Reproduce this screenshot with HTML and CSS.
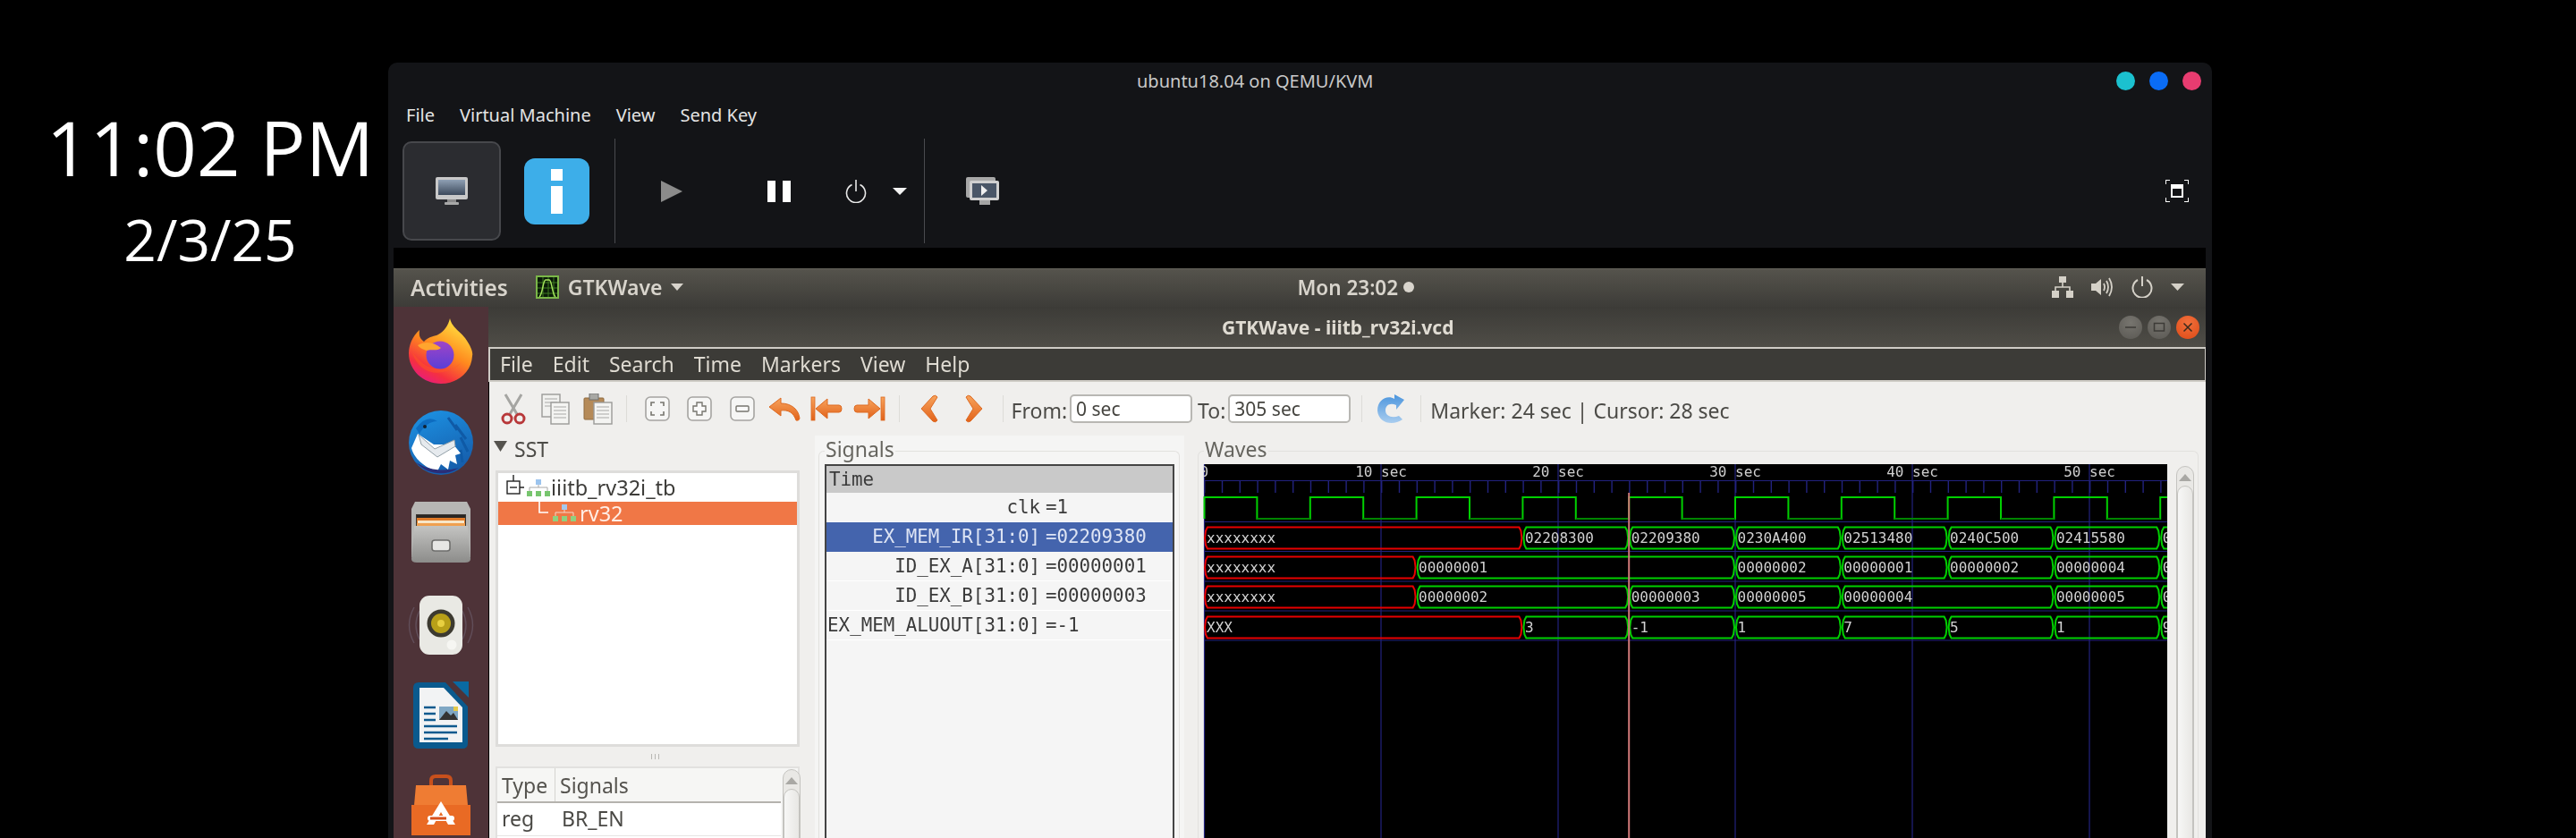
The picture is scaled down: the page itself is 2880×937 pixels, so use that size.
FILE: index.html
```html
<!DOCTYPE html>
<html lang="en">
<head>
<meta charset="utf-8">
<title>ubuntu18.04 on QEMU/KVM</title>
<link rel="stylesheet" href="styles.css">
</head>
<body>
<div class="desktop">
  <div class="clock">
    <div class="clock-time">11:02 PM</div>
    <div class="clock-date">2/3/25</div>
  </div>
  <div class="vm">
    <div class="vm-title">
      <span class="vm-title-text">ubuntu18.04 on QEMU/KVM</span>
      <div class="dots"><i class="dot teal"></i><i class="dot blue"></i><i class="dot pink"></i></div>
    </div>
    <div class="vm-menu"><span>File</span><span>Virtual Machine</span><span>View</span><span>Send Key</span></div>
    <div class="vm-tools">
      <div class="vm-btn">
        <svg width="36" height="32" viewBox="0 0 36 32"><defs><linearGradient id="scr" x1="0" y1="0" x2="0" y2="1"><stop offset="0" stop-color="#8fa0b4"/><stop offset="1" stop-color="#3d4a5c"/></linearGradient></defs><rect x="0" y="0" width="36" height="25" rx="2" fill="#c9c9c9"/><rect x="3" y="3" width="30" height="17" fill="url(#scr)"/><rect x="13" y="25" width="10" height="3" fill="#8a8a8a"/><rect x="10" y="28" width="16" height="3" rx="1" fill="#a8a8a8"/></svg>
      </div>
      <div class="vm-info"><i class="info-dot"></i><i class="info-stem"></i></div>
      <i class="vm-sep sep-a"></i>
      <svg class="i-play" width="24" height="24" viewBox="0 0 24 24"><path d="M0 0L24 12L0 24Z" fill="#8b8b8b"/></svg>
      <div class="i-pause"><i></i><i></i></div>
      <svg class="i-power" width="24" height="26" viewBox="0 0 24 26"><path d="M7.5 5.5A10.5 10.5 0 1 0 16.5 5.5" fill="none" stroke="#e8e8e8" stroke-width="1.6"/><path d="M12 0V13" stroke="#e8e8e8" stroke-width="1.6"/></svg>
      <svg class="i-drop" width="16" height="8" viewBox="0 0 16 8"><path d="M0 0H16L8 8Z" fill="#f2f2f2"/></svg>
      <i class="vm-sep sep-b"></i>
      <svg class="i-screens" width="37" height="32" viewBox="0 0 37 32"><rect x="0" y="0" width="33" height="23" rx="2" fill="#a8a8a8"/><rect x="4" y="4" width="33" height="22" rx="2" fill="#d0d0d0"/><rect x="7" y="7" width="27" height="16" fill="#4a5667"/><path d="M17 9L24 15L17 21Z" fill="#f0f0f0"/><rect x="15" y="26" width="12" height="5" fill="#a4a4a4"/></svg>
      <svg class="i-full" width="26" height="25" viewBox="0 0 26 25"><path d="M0 5V0H5M21 0H26V5M26 20V25H21M5 25H0V20" fill="none" stroke="#fff" stroke-width="2"/><rect x="6" y="5" width="14" height="15" fill="#fff"/><rect x="8" y="10" width="10" height="8" fill="#131417"/></svg>
    </div>

    <div class="guest">
      <div class="topbar">
        <span class="activities">Activities</span>
        <svg class="gw-icon" width="26" height="26" viewBox="0 0 26 26"><rect x="1" y="1" width="24" height="24" fill="#0a1a08" stroke="#7ab648" stroke-width="2"/><path d="M2 8H24M2 14H24M2 20H24M8 2V24M14 2V24M20 2V24" stroke="#3f7a20" stroke-width="1"/><path d="M4 24C8 20 8 5 11 5H15C18 5 18 20 22 24" fill="none" stroke="#a4e45c" stroke-width="1.5"/></svg>
        <span class="app-name">GTKWave</span>
        <svg class="top-arrow" width="14" height="8" viewBox="0 0 14 8"><path d="M0 0H14L7 8Z" fill="#d8d4cc"/></svg>
        <span class="datetime">Mon 23:02</span><i class="notif"></i>
        <div class="status">
          <svg width="24" height="24" viewBox="0 0 24 24"><g fill="#d5d1c8"><rect x="8" y="0" width="8" height="7"/><rect x="0" y="16" width="8" height="8"/><rect x="16" y="16" width="8" height="8"/></g><path d="M12 7V12M4 16V12H20V16" fill="none" stroke="#d5d1c8" stroke-width="1.6"/></svg>
          <svg width="25" height="22" viewBox="0 0 25 22"><path d="M0 7H5L11 2V20L5 15H0Z" fill="#d5d1c8"/><path d="M14 7Q16 11 14 15M17 4Q21 11 17 18M20 1Q26 11 20 21" fill="none" stroke="#d5d1c8" stroke-width="1.8"/></svg>
          <svg width="24" height="24" viewBox="0 0 24 24"><path d="M7 4A10.5 10.5 0 1 0 17 4" fill="none" stroke="#d5d1c8" stroke-width="2"/><path d="M12 0V11" stroke="#d5d1c8" stroke-width="2"/></svg>
          <svg width="15" height="8" viewBox="0 0 15 8"><path d="M0 0H15L7.5 8Z" fill="#d5d1c8"/></svg>
        </div>
      </div>
      <div class="guest-body">
        <div class="dock">
          <svg width="72" height="74" viewBox="0 0 72 74"><defs>
            <linearGradient id="ff" x1=".8" y1=".1" x2=".3" y2="1"><stop offset="0" stop-color="#ffdc3e"/><stop offset=".45" stop-color="#ff8a1e"/><stop offset=".8" stop-color="#f5303f"/><stop offset="1" stop-color="#e81c7c"/></linearGradient>
            <linearGradient id="ffg" x1="0" y1="0" x2="0" y2="1"><stop offset="0" stop-color="#a044c8"/><stop offset="1" stop-color="#5a3fd6"/></linearGradient>
          </defs><path d="M46 0C48 10 58 15 63 22C70 32 72 38 71 42C70 60 55 73 36 73C16 73 0 58 0 39C0 30 4 20 12 13C11 20 13 23 17 26C22 20 30 20 33 18C40 14 44 8 46 0Z" fill="url(#ff)"/><circle cx="35" cy="41" r="15.5" fill="url(#ffg)"/><path d="M10 30C18 25 28 26 36 33C32 37 24 34 20 36C15 34 12 33 10 30Z" fill="#ffa52e"/><path d="M4 38C10 60 34 70 58 50C50 60 38 58 28 56C18 54 12 48 4 38Z" fill="#ff5a22" opacity=".45"/></svg>
          <svg width="76" height="74" viewBox="0 0 76 74"><defs><linearGradient id="tb" x1=".3" y1="0" x2=".7" y2="1"><stop offset="0" stop-color="#1c8fe0"/><stop offset="1" stop-color="#155aa8"/></linearGradient></defs><circle cx="38" cy="38" r="36" fill="url(#tb)"/><path d="M46 10L56 24M54 18L66 34M60 32L68 48M60 46L62 60" stroke="#0f5aa6" stroke-width="3"/><path d="M5 44L12 28L30 40L52 40L60 50L54 52L56 62L48 58L46 68L38 62L34 70C20 66 8 56 5 44Z" fill="#fff"/><path d="M13 29L31 45L53 35L54 42L34 54L16 40Z" fill="#e6eaee" stroke="#93a0a8" stroke-width="1"/><path d="M10 60C22 74 44 76 58 66C44 70 26 70 10 60Z" fill="#2a2e78"/><path d="M10 22Q22 6 34 14Q22 14 14 28Z" fill="#0d6cc0"/><circle cx="20" cy="20" r="2" fill="#123"/></svg>
          <svg width="66" height="68" viewBox="0 0 66 68"><defs><linearGradient id="cab" x1="0" y1="0" x2="0" y2="1"><stop offset="0" stop-color="#c4c4c2"/><stop offset="1" stop-color="#8c8c8a"/></linearGradient></defs><path d="M4 0H62L66 8V62H0V8Z" fill="#b6b6b4"/><rect x="5" y="14" width="56" height="22" fill="#3a3632"/><rect x="6" y="15" width="54" height="4" fill="#2a2622"/><rect x="6" y="18" width="54" height="8" fill="#e07a28"/><rect x="7" y="21" width="52" height="3" fill="#f8e6c8"/><rect x="6" y="24" width="54" height="6" fill="#f0a050"/><path d="M3 27H63L66 64Q66 68 60 68H6Q0 68 0 64Z" fill="url(#cab)"/><rect x="23" y="43" width="20" height="12" rx="3" fill="#e6e6e4" stroke="#6e6e6c" stroke-width="1.6"/></svg>
          <svg width="76" height="68" viewBox="0 0 76 68"><g fill="none" stroke="#6a5a68" stroke-width="1.4" opacity=".7"><path d="M8 14Q-3 34 8 54"/><path d="M14 18Q6 34 14 50"/><path d="M68 14Q79 34 68 54"/><path d="M62 18Q70 34 62 50"/></g><rect x="14" y="1" width="48" height="66" rx="11" fill="#e9e9e4"/><circle cx="38" cy="32" r="15.5" fill="#3c3a30"/><circle cx="38" cy="32" r="11" fill="#b8a018"/><circle cx="38" cy="32" r="4" fill="#e8d040"/><circle cx="50" cy="56" r="5.5" fill="#f6f6f2"/></svg>
          <svg width="64" height="76" viewBox="0 0 64 76"><path d="M7 1H37L62 28V69Q62 75 56 75H7Q1 75 1 69V7Q1 1 7 1Z" fill="#0a5a8e"/><path d="M45 0H63V18Z" fill="#0a6aa2"/><path d="M8 7H35L56 29V68H8Z" fill="#f2f3f4"/><path d="M13 29H26M13 36H26M13 43H26M13 50H50M13 57H50M13 64H40" stroke="#0e5a8e" stroke-width="2.6"/><rect x="30" y="28" width="21" height="15" fill="#7fa7c4"/><path d="M30 43L38 33L43 38L46 35L51 43Z" fill="#333"/><rect x="46" y="28" width="5" height="5" fill="#e4c94a"/></svg>
          <svg width="68" height="70" viewBox="0 0 68 70"><path d="M23 14V7Q23 2 28 2H40Q45 2 45 7V14" fill="none" stroke="#c8501c" stroke-width="4"/><path d="M6 12H62L67 68H1Z" fill="#ef7c33"/><path d="M1 34H67V68H1Z" fill="#e96a24"/><path d="M34 30L50 56H42L34 42L26 56H18Z" fill="#fff"/><rect x="19" y="46" width="30" height="6" rx="3" fill="#fff"/><rect x="22" y="47.5" width="18" height="3" fill="#d8501c"/></svg>
        </div>
        <div class="app">
          <div class="app-title">
            <span class="app-title-text">GTKWave - iiitb_rv32i.vcd</span>
            <div class="win-btns">
              <div class="win-btn"><svg width="14" height="14" viewBox="0 0 14 14"><path d="M1 7H13" stroke="#3c3b37" stroke-width="1.5"/></svg></div>
              <div class="win-btn"><svg width="14" height="14" viewBox="0 0 14 14"><rect x="1.5" y="2.5" width="11" height="8.5" fill="none" stroke="#3c3b37" stroke-width="1.5"/></svg></div>
              <div class="win-btn close"><svg width="14" height="14" viewBox="0 0 14 14"><path d="M2.5 2.5L11.5 11.5M11.5 2.5L2.5 11.5" stroke="#3c2a1c" stroke-width="1.5"/></svg></div>
            </div>
          </div>
          <div class="app-menu"><span>File</span><span>Edit</span><span>Search</span><span>Time</span><span>Markers</span><span>View</span><span>Help</span></div>
          <div class="app-main">
            <div class="toolbar">
              <svg class="t-icons" width="0" height="0"><defs>
                <linearGradient id="or" x1="0" y1="0" x2="0" y2="1"><stop offset="0" stop-color="#f7a35c"/><stop offset="1" stop-color="#e2621a"/></linearGradient>
              </defs></svg>
              <div class="tool"><svg width="28" height="35" viewBox="0 0 28 35"><path d="M5 1L18 23M23 1L10 23" stroke="#a5a5a2" stroke-width="3"/><g fill="none" stroke="#b8383a" stroke-width="3"><ellipse cx="7" cy="28" rx="5" ry="5"/><ellipse cx="21" cy="28" rx="5" ry="5"/></g></svg></div>
              <div class="tool"><svg width="32" height="35" viewBox="0 0 32 35"><rect x="1" y="1" width="20" height="25" fill="#f1f1ef" stroke="#9a9a98" stroke-width="1.4"/><path d="M4 6H18M4 10H18M4 14H18" stroke="#a8a8a6"/><rect x="11" y="10" width="20" height="24" fill="#f4f4f2" stroke="#9a9a98" stroke-width="1.4"/><path d="M14 15H28M14 19H28M14 23H28M14 27H28" stroke="#a8a8a6" stroke-width="1.2"/></svg></div>
              <div class="tool"><svg width="33" height="35" viewBox="0 0 33 35"><rect x="1" y="5" width="22" height="24" rx="1" fill="#b58a58" stroke="#8f6a3f"/><rect x="7" y="0" width="10" height="7" fill="#a8a8a4" stroke="#707070"/><rect x="12" y="10" width="20" height="24" fill="#f4f4f2" stroke="#9a9a98" stroke-width="1.4"/><path d="M15 15H29M15 19H29M15 23H29M15 27H29" stroke="#a8a8a6" stroke-width="1.2"/></svg></div>
              <i class="t-sep s1"></i>
              <div class="tool"><svg width="28" height="28" viewBox="0 0 28 28"><rect x="1" y="1" width="26" height="26" rx="5" fill="#f6f6f5" stroke="#a5a4a1" stroke-width="1.6"/><path d="M7 11V7H11M17 7H21V11M21 17V21H17M11 21H7V17" fill="none" stroke="#77766f" stroke-width="1.6"/></svg></div>
              <div class="tool"><svg width="28" height="28" viewBox="0 0 28 28"><rect x="1" y="1" width="26" height="26" rx="5" fill="#f6f6f5" stroke="#a5a4a1" stroke-width="1.6"/><path d="M11 7H17V11H21V17H17V21H11V17H7V11H11Z" fill="#fafafa" stroke="#77766f" stroke-width="1.4"/></svg></div>
              <div class="tool"><svg width="28" height="28" viewBox="0 0 28 28"><rect x="1" y="1" width="26" height="26" rx="5" fill="#f6f6f5" stroke="#a5a4a1" stroke-width="1.6"/><rect x="7" y="11" width="14" height="6" rx="1" fill="#fafafa" stroke="#77766f" stroke-width="1.4"/></svg></div>
              <div class="tool"><svg width="36" height="27" viewBox="0 0 36 27"><path d="M14 1L1 11L14 21V15C22 14 28 17 31 26Q34 27 35 24C34 14 26 7 14 7Z" fill="url(#or)" stroke="#dd6a22"/></svg></div>
              <div class="tool"><svg width="36" height="28" viewBox="0 0 36 28"><rect x="1" y="1" width="4" height="26" fill="url(#or)" stroke="#dd6a22" stroke-width=".8"/><path d="M19 3L6 14L19 25V18H32Q35 18 35 14Q35 10 32 10H19Z" fill="url(#or)" stroke="#dd6a22"/></svg></div>
              <div class="tool"><svg width="36" height="28" viewBox="0 0 36 28"><rect x="31" y="1" width="4" height="26" fill="url(#or)" stroke="#dd6a22" stroke-width=".8"/><path d="M17 3L30 14L17 25V18H4Q1 18 1 14Q1 10 4 10H17Z" fill="url(#or)" stroke="#dd6a22"/></svg></div>
              <i class="t-sep s2"></i>
              <div class="tool nav"><svg width="20" height="32" viewBox="0 0 20 32"><path d="M14 2Q17 0 19 3L11 16L19 29Q17 32 14 30L1 16Z" fill="url(#or)" stroke="#dd6a22"/></svg></div>
              <div class="tool nav"><svg width="20" height="32" viewBox="0 0 20 32"><path d="M6 2Q3 0 1 3L9 16L1 29Q3 32 6 30L19 16Z" fill="url(#or)" stroke="#dd6a22"/></svg></div>
              <i class="t-sep s3"></i>
              <span class="t-label from">From:</span>
              <div class="entry">0 sec</div>
              <span class="t-label to">To:</span>
              <div class="entry">305 sec</div>
              <i class="t-sep s4"></i>
              <svg class="refresh" width="31" height="33" viewBox="0 0 31 33"><defs><linearGradient id="rf" x1="0" y1="0" x2="0" y2="1"><stop offset="0" stop-color="#4b95dd"/><stop offset="1" stop-color="#a9cdef"/></linearGradient></defs><path d="M19 0L30 6L21 17V12C14 9 9 12 9 18C9 24 16 27 24 24L28 28C17 36 1 32 0 18C0 6 11 0 19 5Z" fill="url(#rf)"/></svg>
              <i class="t-sep s5"></i>
              <span class="t-label marker">Marker: 24 sec | Cursor: 28 sec</span>
            </div>
            <div class="panes">
              <div class="sst">
                <div class="sst-head"><svg width="15" height="12" viewBox="0 0 15 12"><path d="M0 0H15L7.5 12Z" fill="#55534e"/></svg><span>SST</span></div>
                <div class="tree">
                  <div class="tree-row">
                    <svg class="tree-exp" width="20" height="24" viewBox="0 0 20 24"><path d="M8 0V7M15 14H20" stroke="#222" stroke-width="1.4"/><rect x="1" y="7" width="14" height="14" fill="#fff" stroke="#222" stroke-width="1.4"/><path d="M4 14H12" stroke="#222" stroke-width="1.4"/></svg>
                    <svg class="hier" width="26" height="22" viewBox="0 0 26 22"><rect x="10" y="1" width="6" height="6" fill="#9cc4ee"/><path d="M13 7V10M3 14V10H23V14" fill="none" stroke="#a8a8a8"/><g fill="#77c56e"><rect x="0" y="14" width="6" height="6"/><rect x="10" y="14" width="6" height="6"/><rect x="20" y="14" width="6" height="6"/></g></svg>
                    <span>iiitb_rv32i_tb</span>
                  </div>
                  <div class="tree-row selected">
                    <svg class="tree-l" width="11" height="13" viewBox="0 0 11 13"><path d="M1 0V12H11" fill="none" stroke="#fff" stroke-width="1.6"/></svg>
                    <svg class="hier" width="26" height="22" viewBox="0 0 26 22"><rect x="10" y="1" width="6" height="6" fill="#a6c8ec"/><path d="M13 7V10M3 14V10H23V14" fill="none" stroke="#f4d8c8"/><g fill="#8fd080"><rect x="0" y="14" width="6" height="6"/><rect x="10" y="14" width="6" height="6"/><rect x="20" y="14" width="6" height="6"/></g></svg>
                    <span>rv32</span>
                  </div>
                </div>
                <div class="handle"><i></i><i></i><i></i></div>
                <div class="sigtable">
                  <div class="sig-cols">
                    <div class="sig-head"><span class="c-type">Type</span><span class="c-sig">Signals</span></div>
                    <div class="sig-row"><span class="c-type">reg</span><span class="c-sig">BR_EN</span></div>
                  </div>
                  <div class="scroll small"><svg width="14" height="8" viewBox="0 0 14 8"><path d="M7 0L14 8H0Z" fill="#a9a8a4"/></svg><div class="thumb"></div></div>
                </div>
              </div>
              <div class="signals-pane">
                <fieldset class="frame signals">
                  <legend>Signals</legend>
                  <div class="siglist">
                    <div class="sl-time">Time</div>
                    <div class="sl-row"><span>clk</span><span>=1</span></div>
                    <div class="sl-row active"><span>EX_MEM_IR[31:0]</span><span>=02209380</span></div>
                    <div class="sl-row"><span>ID_EX_A[31:0]</span><span>=00000001</span></div>
                    <div class="sl-row"><span>ID_EX_B[31:0]</span><span>=00000003</span></div>
                    <div class="sl-row"><span>EX_MEM_ALUOUT[31:0]</span><span>=-1</span></div>
                  </div>
                </fieldset>
              </div>
              <div class="waves-pane">
                <fieldset class="frame waves">
                  <legend>Waves</legend>
                  <div class="wave-wrap">
                    <svg class="wave" width="1077" height="440" viewBox="0 0 1077 440">
                      <defs>
                        <clipPath id="canvas"><rect x="0" y="0" width="1077" height="440"/></clipPath>
                        <polygon id="s1" points="1,12 2,4 4,0 114.8,0 116.8,4 117.8,12 116.8,20 114.8,24 4,24 2,20"/>
                        <polygon id="s2" points="1,12 2,4 4,0 233.6,0 235.6,4 236.6,12 235.6,20 233.6,24 4,24 2,20"/>
                        <polygon id="s3" points="1,12 2,4 4,0 352.4,0 354.4,4 355.4,12 354.4,20 352.4,24 4,24 2,20"/>
                      </defs>
                      <g class="grid">
                        <path d="M.5 0V440M198 0V440M396 0V440M594 0V440M792 0V440M990 0V440"/>
                        <path d="M0 18.5H1077M0 64.5H1077M0 97.5H1077M0 131H1077M0 164H1077M0 197H1077"/>
                        <line class="ticks" x1="0" y1="25" x2="1077" y2="25"/>
                      </g>
                      <g class="tlabels">
                        <text x="-4.5" y="14" clip-path="url(#canvas)">0</text>
                        <text x="169.2" y="14">10 sec</text>
                        <text x="367.2" y="14">20 sec</text>
                        <text x="565.2" y="14">30 sec</text>
                        <text x="763.2" y="14">40 sec</text>
                        <text x="961.2" y="14">50 sec</text>
                      </g>
                      <path class="clk" d="M.5 61V37H59.4V61H118.8V37H178.2V61H237.6V37H297V61H356.4V37H415.8V61H475.2V37H534.6V61H594V37H653.4V61H712.8V37H772.2V61H831.6V37H891V61H950.4V37H1009.8V61H1069.2V37H1077"/>
                      <path class="clk-low" d="M59.4 61H118.8M178.2 61H237.6M297 61H356.4M415.8 61H475.2M534.6 61H594M653.4 61H712.8M772.2 61H831.6M891 61H950.4M1009.8 61H1069.2"/>
                      <g class="red">
                        <use href="#s3" x="0" y="70.5"/><use href="#s2" x="0" y="103.5"/><use href="#s2" x="0" y="136.5"/><use href="#s3" x="0" y="170.5"/>
                      </g>
                      <g class="grn" clip-path="url(#canvas)">
                        <use href="#s1" x="356.4" y="70.5"/><use href="#s1" x="475.2" y="70.5"/><use href="#s1" x="594" y="70.5"/><use href="#s1" x="712.8" y="70.5"/><use href="#s1" x="831.6" y="70.5"/><use href="#s1" x="950.4" y="70.5"/><use href="#s1" x="1069.2" y="70.5"/>
                        <use href="#s3" x="237.6" y="103.5"/><use href="#s1" x="594" y="103.5"/><use href="#s1" x="712.8" y="103.5"/><use href="#s1" x="831.6" y="103.5"/><use href="#s1" x="950.4" y="103.5"/><use href="#s1" x="1069.2" y="103.5"/>
                        <use href="#s2" x="237.6" y="136.5"/><use href="#s1" x="475.2" y="136.5"/><use href="#s1" x="594" y="136.5"/><use href="#s2" x="712.8" y="136.5"/><use href="#s1" x="950.4" y="136.5"/><use href="#s1" x="1069.2" y="136.5"/>
                        <use href="#s1" x="356.4" y="170.5"/><use href="#s1" x="475.2" y="170.5"/><use href="#s1" x="594" y="170.5"/><use href="#s1" x="712.8" y="170.5"/><use href="#s1" x="831.6" y="170.5"/><use href="#s1" x="950.4" y="170.5"/><use href="#s1" x="1069.2" y="170.5"/>
                      </g>
                      <g class="vals" clip-path="url(#canvas)">
                        <text x="3" y="88">xxxxxxxx</text><text x="358.9" y="88">02208300</text><text x="477.7" y="88">02209380</text><text x="596.5" y="88">0230A400</text><text x="715.3" y="88">02513480</text><text x="834.1" y="88">0240C500</text><text x="952.9" y="88">02415580</text><text x="1071.7" y="88">0</text>
                        <text x="3" y="121">xxxxxxxx</text><text x="240.1" y="121">00000001</text><text x="596.5" y="121">00000002</text><text x="715.3" y="121">00000001</text><text x="834.1" y="121">00000002</text><text x="952.9" y="121">00000004</text><text x="1071.7" y="121">0</text>
                        <text x="3" y="154">xxxxxxxx</text><text x="240.1" y="154">00000002</text><text x="477.7" y="154">00000003</text><text x="596.5" y="154">00000005</text><text x="715.3" y="154">00000004</text><text x="952.9" y="154">00000005</text><text x="1071.7" y="154">0</text>
                        <text x="3" y="188">XXX</text><text x="358.9" y="188">3</text><text x="477.7" y="188">-1</text><text x="596.5" y="188">1</text><text x="715.3" y="188">7</text><text x="834.1" y="188">5</text><text x="952.9" y="188">1</text><text x="1071.7" y="188">9</text>
                      </g>
                      <path class="mark" d="M475.2 32V440"/>
                    </svg>
                    <div class="scroll"><svg width="14" height="8" viewBox="0 0 14 8"><path d="M7 0L14 8H0Z" fill="#a9a8a4"/></svg><div class="thumb"></div></div>
                  </div>
                </fieldset>
              </div>
            </div>
          </div>
        </div>
      </div>
    </div>
  </div>
</div>
</body>
</html>
```
FILE: styles.css
```css
* { box-sizing: border-box; }
html, body { margin: 0; padding: 0; background: #000; }
i { display: block; }
svg { display: block; flex: none; }

.desktop { display: flex; width: 2880px; height: 937px; overflow: hidden; background: #000; }

.clock { width: 434px; flex: none; padding: 116px 0 0 36px; color: #fff; text-align: center; font-family: "Open Sans", sans-serif; }
.clock-time { font-size: 85px; line-height: 96px; white-space: nowrap; }
.clock-date { font-size: 64px; line-height: 88px; margin-top: 12px; }

.vm { width: 2039px; height: 867px; margin-top: 70px; flex: none; background: #131417; border-radius: 10px 10px 0 0; display: flex; flex-direction: column; font-family: "Noto Sans", sans-serif; }
.vm-title { height: 40px; flex: none; display: flex; align-items: center; justify-content: space-between; padding: 0 12px 0 837px; }
.vm-title-text { color: #c9c9c9; font-size: 20px; white-space: nowrap; }
.dots { display: flex; gap: 16px; }
.dot { width: 21px; height: 21px; border-radius: 50%; }
.teal { background: #1bc1cf; }
.blue { background: #0a6cf5; }
.pink { background: #e83c70; }

.vm-menu { height: 40px; flex: none; display: flex; gap: 28px; padding: 0 0 4px 20px; align-items: center; color: #e4e4e4; font-size: 20px; }

.vm-tools { height: 127px; flex: none; display: flex; align-items: center; padding: 0 26px 0 16px; }
.vm-btn { width: 110px; height: 111px; background: #2b2c30; border: 2px solid #47484c; border-radius: 10px; display: flex; align-items: center; justify-content: center; }
.vm-info { width: 73px; height: 74px; margin-left: 26px; background: #3daee9; border-radius: 12px; display: flex; flex-direction: column; align-items: center; padding-top: 12px; }
.info-dot { width: 13px; height: 13px; background: #fff; }
.info-stem { width: 13px; height: 31px; margin-top: 6px; background: #fff; }
.vm-sep { width: 1px; height: 117px; background: #4a4b4f; }
.sep-a { margin-left: 28px; }
.sep-b { margin-left: 19px; }
.i-play { margin-left: 51px; }
.i-pause { margin-left: 95px; display: flex; gap: 8px; }
.i-pause i { width: 9px; height: 24px; background: #fff; }
.i-power { margin-left: 61px; }
.i-drop { margin-left: 29px; }
.i-screens { margin-left: 46px; }
.i-full { margin-left: auto; }

.guest { flex: none; height: 660px; margin: 0 7px 0 6px; padding-top: 23px; background: #000; overflow: hidden; filter: blur(.45px); font-family: "Noto Sans", sans-serif; }

.topbar { height: 43px; display: flex; align-items: center; padding: 0 24px 2px 19px; background: linear-gradient(#55534c, #3d3c38); border-top: 1px solid #64625a; color: #d8d4cc; font-size: 23px; }
.activities { font-weight: 600; font-size: 24.4px; }
.gw-icon { margin-left: 31px; }
.app-name { margin-left: 10px; font-weight: 600; }
.top-arrow { margin-left: 10px; }
.datetime { margin-left: 686px; font-weight: 600; white-space: nowrap; font-size: 22.5px; }
.notif { width: 12px; height: 12px; margin-left: 6px; border-radius: 50%; background: #d8d4cc; }
.status { margin-left: auto; display: flex; align-items: center; gap: 20px; }

.guest-body { display: flex; height: 594px; }
.dock { width: 106px; flex: none; padding-top: 13px; background: #4e3338; display: flex; flex-direction: column; align-items: center; gap: 30px; }
.dock svg:nth-child(2) { margin-top: -3px; }
.dock svg:nth-child(4) { margin-top: 6px; }
.dock svg:nth-child(5) { margin-top: -1px; }
.dock svg:nth-child(6) { margin-top: -2px; }

.app { flex: 1; min-width: 0; display: flex; flex-direction: column; }
.app-title { height: 45px; flex: none; display: flex; align-items: center; justify-content: space-between; padding: 0 7px 0 820px; background: linear-gradient(#3c3b37, #4f4d47); }
.app-title-text { color: #dfdbd2; font-size: 21px; font-weight: 700; white-space: nowrap; }
.win-btns { display: flex; gap: 6px; }
.win-btn { width: 26px; height: 26px; border-radius: 50%; background: radial-gradient(circle at 50% 30%, #77756f, #5a5853); display: flex; align-items: center; justify-content: center; }
.win-btn.close { background: radial-gradient(circle at 50% 30%, #f2703c, #dd4a16); }

.app-menu { height: 39px; flex: none; display: flex; gap: 22px; align-items: center; padding: 0 0 2px 11px; background: #3c3b37; border: 1px solid #cfccc6; border-width: 2px 1px 2px 2px; color: #dfdbd2; font-size: 23px; }

.app-main { flex: 1; min-height: 0; margin-left: 1px; background: #f0efed; display: flex; flex-direction: column; color: #4c4b47; font-size: 23px; }
.toolbar { height: 60px; flex: none; display: flex; align-items: center; padding: 0 0 0 3px; }
.t-icons { position: absolute; }
.tool { width: 47.4px; flex: none; display: flex; justify-content: center; }
.tool.nav { width: 50px; }
.t-sep { width: 1px; height: 30px; background: #dddcd8; flex: none; }
.s1 { margin: 0 10px 0 8px; }
.s2 { margin: 0 8px 0 9px; }
.s3 { margin: 0 9px 0 7px; }
.s4 { margin: 0 17px 0 12px; }
.s5 { margin: 0 10px 0 17px; }
.t-label { white-space: pre; padding-top: 3px; }
.t-label.from { margin-right: 3px; }
.t-label.to { margin: 0 3px 0 6px; }
.entry { width: 137px; height: 32px; background: #fff; border: 2px solid #b8b7b3; border-radius: 5px; padding: 0 0 0 5px; line-height: 28px; font-size: 21px; flex: none; color: #45443f; }

.panes { height: 500px; flex: none; display: flex; }
.sst { width: 364px; flex: none; padding-left: 7px; }
.sst-head { height: 39px; display: flex; align-items: center; gap: 8px; }
.sst-head svg { margin: -16px 0 0 -2px; }
.sst-head span { margin-top: -9px; }
.tree { width: 340px; height: 309px; background: #fff; border: 3px solid #dedddb; padding: 1px 0 0; color: #3e3d3a; }
.tree-row { height: 31px; display: flex; align-items: center; padding-left: 9px; }
.tree-row span { margin-left: 1px; font-size: 23.5px; line-height: 28px; margin-top: -2px; }
.tree-exp { margin-top: -6px; }
.hier { margin-left: 3px; }
.tree-row.selected { height: 26px; background: #f07746; color: #ffeee6; padding-left: 45px; align-items: flex-start; }
.tree-row.selected .hier { margin: 2px 0 0 5px; }
.tree-row.selected span { line-height: 26px; margin: 0 0 0 4px; }
.handle { height: 22px; display: flex; gap: 3px; align-items: center; justify-content: center; }
.handle i { width: 1px; height: 6px; background: #b8b7b3; }
.sigtable { width: 340px; height: 90px; border: 2px solid #e2e1df; border-bottom: 0; background: #f6f6f5; display: flex; }
.sig-cols { width: 317px; flex: none; background: #fff; }
.sig-head { height: 39px; display: flex; align-items: center; background: #f6f6f4; border-bottom: 2px solid #b5b3ae; color: #55534e; }
.sig-row { height: 37px; display: flex; align-items: center; padding-bottom: 3px; border-bottom: 1px solid #e6e5e3; color: #4a4945; }
.c-type { width: 65px; padding-left: 5px; flex: none; }
.sig-head .c-type { border-right: 1px solid #d5d4d0; height: 100%; line-height: 39px; }
.c-sig { padding-left: 5px; }
.sig-row .c-sig { padding-left: 7px; }

.scroll { width: 20px; flex: none; height: 500px; margin-top: 2px; border: 1px solid #c4c3bf; border-radius: 10px 10px 0 0; background: #e9e8e5; display: flex; flex-direction: column; align-items: center; padding-top: 8px; }
.scroll.small { margin-left: 2px; margin-top: 1px; height: 90px; }
.thumb { width: 18px; flex: 1; margin-top: 5px; background: linear-gradient(90deg, #f7f7f6, #e8e7e4); border: 1px solid #c4c3bf; border-radius: 9px 9px 0 0; }

.signals-pane { width: 413px; flex: none; padding-left: 4px; background: #f5f5f4; }
.waves-pane { flex: 1; min-width: 0; padding-left: 15px; }
.frame { margin: 4px 0 0; padding: 2px 0 0 5px; height: 500px; border: 1px solid #e2e1de; border-bottom: 0; border-radius: 6px 6px 0 0; min-width: 0; }
.frame legend { padding: 0 1px 4px; margin-left: 0; height: 26px; line-height: 22px; font-size: 23px; color: #66655f; }
.signals { width: 404px; padding-left: 6px; }
.waves { width: 1119px; padding-left: 6px; }

.siglist { width: 391px; height: 460px; border: 2px solid #444; border-bottom: 0; background: #f5f5f5; font-family: "DejaVu Sans Mono", monospace; font-size: 20.8px; color: #3a3a3a; }
.sl-time { height: 30px; line-height: 30px; padding-left: 3px; background: #c9c9c9; }
.sl-row { height: 33px; display: grid; grid-template-columns: 239px 1fr; column-gap: 6px; line-height: 33px; border-bottom: 1px solid #fff; white-space: nowrap; }
.sl-row span:first-child { text-align: right; }
.sl-row.active { background: #4464ad; color: #dde4f4; border-bottom-color: #4464ad; }

.wave-wrap { display: flex; gap: 10px; }
.wave { background: #000; overflow: visible; }
.grid path { fill: none; stroke: #22227e; stroke-width: 1.2; }
.grid .ticks { stroke: #22227e; stroke-width: 14; stroke-dasharray: 1.4 18.4; }
.tlabels text { font-family: "DejaVu Sans Mono", monospace; font-size: 16px; fill: #cfcfcf; }
.clk { fill: none; stroke: #00d000; stroke-width: 2; }
.clk-low { fill: none; stroke: #008400; stroke-width: 2; }
.red use { fill: none; stroke: #e80000; stroke-width: 2; }
.grn use { fill: none; stroke: #00d000; stroke-width: 2; }
.vals text { font-family: "DejaVu Sans Mono", monospace; font-size: 16px; fill: #d2d2d2; }
.mark { fill: none; stroke: #d07878; stroke-width: 2; }
```
